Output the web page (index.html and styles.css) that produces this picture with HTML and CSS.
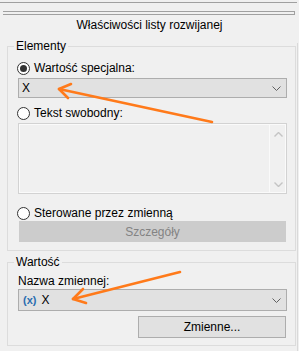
FILE: index.html
```html
<!DOCTYPE html>
<html lang="pl">
<head>
  <meta charset="UTF-8" />
  <meta name="viewport" content="width=device-width, initial-scale=1.0" />
  <title>Właściwości listy rozwijanej</title>
  <link rel="stylesheet" href="styles.css">
</head>
<body>
  <div class="page">
    <div class="top-rule"></div>
    <div class="tab-rule"></div>
    <div class="title">Właściwości listy rozwijanej</div>

    <div class="panel">
      <fieldset class="group group-items">
        <legend>Elementy</legend>
        <label class="radio-row"><span class="radio checked"></span>Wartość specjalna:</label>
        <div class="combo combo-special">
          <span class="combo-value">X</span>
          <svg class="chevron" width="9" height="5" viewBox="0 0 9 5"><path d="M0.5 0.5 L4.5 4.5 L8.5 0.5" fill="none" stroke="#606060" stroke-width="1"/></svg>
        </div>

        <label class="radio-row row-free"><span class="radio"></span>Tekst swobodny:</label>
        <div class="memo">
          <div class="memo-scroll">
            <svg width="9" height="5" viewBox="0 0 9 5"><path d="M0.5 4.5 L4.5 0.5 L8.5 4.5" fill="none" stroke="#c4c4c4" stroke-width="1.4"/></svg>
            <svg width="9" height="5" viewBox="0 0 9 5"><path d="M0.5 0.5 L4.5 4.5 L8.5 0.5" fill="none" stroke="#c4c4c4" stroke-width="1.4"/></svg>
          </div>
        </div>

        <label class="radio-row row-var"><span class="radio"></span>Sterowane przez zmienną</label>
        <div class="button button-disabled">Szczegóły</div>
      </fieldset>

      <fieldset class="group group-value">
        <legend>Wartość</legend>
        <div class="caption">Nazwa zmiennej:</div>
        <div class="combo combo-var">
          <span class="var-icon">(x)</span>
          <span class="combo-value">X</span>
          <svg class="chevron" width="9" height="5" viewBox="0 0 9 5"><path d="M0.5 0.5 L4.5 4.5 L8.5 0.5" fill="none" stroke="#606060" stroke-width="1"/></svg>
        </div>
        <div class="button-row">
          <div class="button">Zmienne...</div>
        </div>
      </fieldset>
    </div>

    <!-- adnotacje -->
    <svg class="arrows" width="299" height="351" viewBox="0 0 299 351">
      <g fill="none" stroke="#ff7a1a" stroke-width="2.6" stroke-linecap="round" stroke-linejoin="round">
        <path d="M212 122 L59 89"/>
        <path d="M71 84 L59 89 L68 98"/>
        <path d="M180 272 L73 299"/>
        <path d="M83 289 L73 299 L86 303"/>
      </g>
    </svg>
  </div>
</body>
</html>
```

FILE: styles.css
```css
html, body {
  margin: 0;
  padding: 0;
}
body {
  background: #f0f0f0;
  font-family: "Liberation Sans", Arial, sans-serif;
  font-size: 12px;
  color: #000;
}
.page {
  position: relative;
  width: 299px;
  height: 351px;
  overflow: hidden;
}

.top-rule {
  margin-top: 2px;
  width: 297px;
  border-top: 1px solid #a0a0a0;
}
.tab-rule {
  margin: 8px 0 0 3px;
  width: 291px;
  height: 2px;
  border: 1px solid #a0a0a0;
  border-left: none;
}
.title {
  margin-top: 2px;
  line-height: 16px;
  text-align: center;
}

.panel {
  display: flex;
  flex-direction: column;
  margin-top: 10px;
  width: 297px;
  height: 308px;
  border-right: 1px solid #d9d9d9;
}

.group {
  box-sizing: border-box;
  width: 289px;
  margin: 0 0 0 7px;
  padding: 0 8px 0 10px;
  border: 1px solid #dcdcdc;
  min-inline-size: 0;
}
.group legend {
  padding: 0 2px;
  margin-left: -4px;
  line-height: 16px;
}
.group-items {
  margin-top: -5px;
  padding-top: 7px;
  padding-bottom: 8px;
}
.group-value {
  margin-top: 3px;
  padding-top: 4px;
  padding-bottom: 7px;
}

.radio-row {
  display: flex;
  align-items: center;
  height: 15px;
  line-height: 15px;
  margin-left: -1px;
}
.row-free {
  margin-top: 8px;
}
.row-var {
  margin-top: 12px;
}
.radio {
  box-sizing: border-box;
  width: 13px;
  height: 13px;
  margin-right: 4px;
  border: 1px solid #333;
  border-radius: 50%;
  background: #fff;
  display: flex;
  align-items: center;
  justify-content: center;
}
.radio.checked::after {
  content: "";
  width: 7px;
  height: 7px;
  border-radius: 50%;
  background: #333;
}

.combo {
  box-sizing: border-box;
  display: flex;
  align-items: center;
  margin-top: 2px;
  height: 20px;
  padding: 0 4px 0 3px;
  background: #e1e1e1;
  border: 1px solid #adadad;
}
.combo-var {
  margin-top: 0;
  height: 22px;
  padding-left: 4px;
}
.combo .chevron {
  margin-left: auto;
  margin-right: 1px;
}
.var-icon {
  color: #2a6db0;
  font-weight: bold;
  font-size: 11px;
  margin-right: 5px;
}

.memo {
  box-sizing: border-box;
  display: flex;
  justify-content: flex-end;
  margin-top: 2px;
  height: 71px;
  border: 1px solid #d2d2d2;
  box-shadow: inset 0 0 0 1px #fafafa;
}
.memo-scroll {
  display: flex;
  flex-direction: column;
  align-items: center;
  justify-content: space-between;
  width: 16px;
  padding: 8px 0 6px;
  border-left: 1px solid #fafafa;
}

.button {
  box-sizing: border-box;
  display: flex;
  align-items: center;
  justify-content: center;
  height: 22px;
  background: #e1e1e1;
  border: 1px solid #adadad;
}
.button-disabled {
  height: 21px;
  margin-left: 1px;
  margin-right: 1px;
  color: #838383;
  background: #cccccc;
  border-color: #cccccc;
}
.caption {
  line-height: 15px;
}
.button-row {
  display: flex;
  justify-content: flex-end;
  margin-top: 5px;
}
.button-row .button {
  width: 148px;
  margin-right: 1px;
}

.arrows {
  position: absolute;
  left: 0;
  top: 0;
  pointer-events: none;
}
```
